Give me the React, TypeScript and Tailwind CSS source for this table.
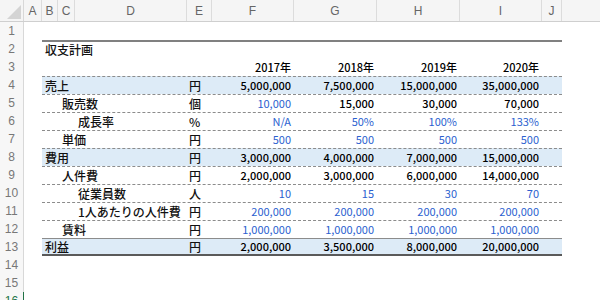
import React from 'react';

const cols = [
  { l: 'A', w: 'w-[18px]' },
  { l: 'B', w: 'w-[16px]' },
  { l: 'C', w: 'w-[17px]' },
  { l: 'D', w: 'w-[112px]' },
  { l: 'E', w: 'w-[25px]' },
  { l: 'F', w: 'w-[82px]' },
  { l: 'G', w: 'w-[83px]' },
  { l: 'H', w: 'w-[83px]' },
  { l: 'I', w: 'w-[82px]' },
  { l: 'J', w: 'w-[20px]' },
];

const valW = ['w-[82px]', 'w-[83px]', 'w-[83px]', 'w-[82px]'];

type Row = {
  label: string;
  unit: string;
  level: 0 | 1 | 2;
  vals: string[];
  blue: boolean[];
  fill?: boolean;
};

const B = [true, true, true, true];
const K = [false, false, false, false];

const rows: Row[] = [
  { label: '売上', unit: '円', level: 0, vals: ['5,000,000', '7,500,000', '15,000,000', '35,000,000'], blue: K, fill: true },
  { label: '販売数', unit: '個', level: 1, vals: ['10,000', '15,000', '30,000', '70,000'], blue: [true, false, false, false] },
  { label: '成長率', unit: '%', level: 2, vals: ['N/A', '50%', '100%', '133%'], blue: B },
  { label: '単価', unit: '円', level: 1, vals: ['500', '500', '500', '500'], blue: B },
  { label: '費用', unit: '円', level: 0, vals: ['3,000,000', '4,000,000', '7,000,000', '15,000,000'], blue: K, fill: true },
  { label: '人件費', unit: '円', level: 1, vals: ['2,000,000', '3,000,000', '6,000,000', '14,000,000'], blue: K },
  { label: '従業員数', unit: '人', level: 2, vals: ['10', '15', '30', '70'], blue: B },
  { label: '1人あたりの人件費', unit: '円', level: 2, vals: ['200,000', '200,000', '200,000', '200,000'], blue: B },
  { label: '賃料', unit: '円', level: 1, vals: ['1,000,000', '1,000,000', '1,000,000', '1,000,000'], blue: B },
  { label: '利益', unit: '円', level: 0, vals: ['2,000,000', '3,500,000', '8,000,000', '20,000,000'], blue: K, fill: true },
];

const indent = ['pl-[3px]', 'pl-[20px]', 'pl-[36px]'];

function RowNum({ n, active }: { n: number; active?: boolean }) {
  return (
    <div
      className={
        'w-[24px] shrink-0 flex items-center justify-center text-[12px] bg-[#f7f7f7] border-r ' +
        (active ? 'text-[#217346] border-[#217346]' : 'text-[#777] border-[#d8d8d8]')
      }
    >
      {n}
    </div>
  );
}

function Line({ n, children }: { n: number; children?: React.ReactNode }) {
  return (
    <div className="flex h-[18px]">
      <RowNum n={n} />
      <div className="w-[18px] shrink-0" />
      {children}
    </div>
  );
}

export default function App() {
  return (
    <div className="w-[600px] h-[300px] overflow-hidden bg-white font-['Liberation_Sans','Noto_Sans_CJK_JP',sans-serif] text-[#111]">
      {/* column headers */}
      <div className="flex h-[22px] bg-[#f5f5f5] border-b border-[#cfcfcf] text-[12px] text-[#666]">
        <div className="w-[24px] shrink-0 border-r border-[#d8d8d8] relative">
          <svg className="absolute right-[2px] bottom-[2px]" width="14" height="14" viewBox="0 0 14 14">
            <polygon points="14,0 14,14 0,14" fill="#d4d4d4" />
          </svg>
        </div>
        {cols.map((c) => (
          <div key={c.l} className={c.w + ' shrink-0 flex items-center justify-center border-r border-[#dcdcdc]'}>
            {c.l}
          </div>
        ))}
        <div className="flex-1" />
      </div>

      <Line n={1} />

      <Line n={2}>
        <div className="w-[520px] border-t-2 border-[#808080] flex items-center pl-[3px] text-[12px] font-medium font-['Noto_Sans_CJK_JP',sans-serif]">
          収支計画
        </div>
      </Line>

      <Line n={3}>
        <div className="w-[520px] flex items-center text-[11px] font-medium font-['Noto_Sans_CJK_JP',sans-serif] text-black">
          <div className="w-[170px]" />
          {['2017年', '2018年', '2019年', '2020年'].map((y, i) => (
            <div key={y} className={valW[i] + ' text-right pr-[3px]'}>
              {y}
            </div>
          ))}
        </div>
      </Line>

      {rows.map((r, idx) => (
        <Line key={r.label} n={idx + 4}>
          <div
            className={
              'w-[520px] flex items-center border-t border-dashed border-t-[#8c8c8c] ' +
              (r.fill ? 'bg-[#ddebf7] ' : '') +
              (idx === rows.length - 1 ? 'border-b-2 border-b-[#5a5a5a] border-solid' : '')
            }
          >
            <div className={'w-[145px] text-[12px] font-medium font-[\'Noto_Sans_CJK_JP\',sans-serif] ' + indent[r.level]}>
              {r.label}
            </div>
            <div className="w-[25px] pl-[2px] text-[12px] font-medium font-['Noto_Sans_CJK_JP',sans-serif]">{r.unit}</div>
            {r.vals.map((v, i) => (
              <div
                key={i}
                className={
                  valW[i] +
                  " text-right pr-[3px] text-[11px] font-['Noto_Sans_CJK_JP',sans-serif] " +
                  (r.blue[i] ? 'text-[#2b5fd0]' : 'font-medium text-black')
                }
              >
                {v}
              </div>
            ))}
            <div className="w-[20px]" />
          </div>
        </Line>
      ))}

      <Line n={14} />
      <Line n={15} />
      <div className="flex h-[18px]">
        <RowNum n={16} active />
      </div>
    </div>
  );
}
